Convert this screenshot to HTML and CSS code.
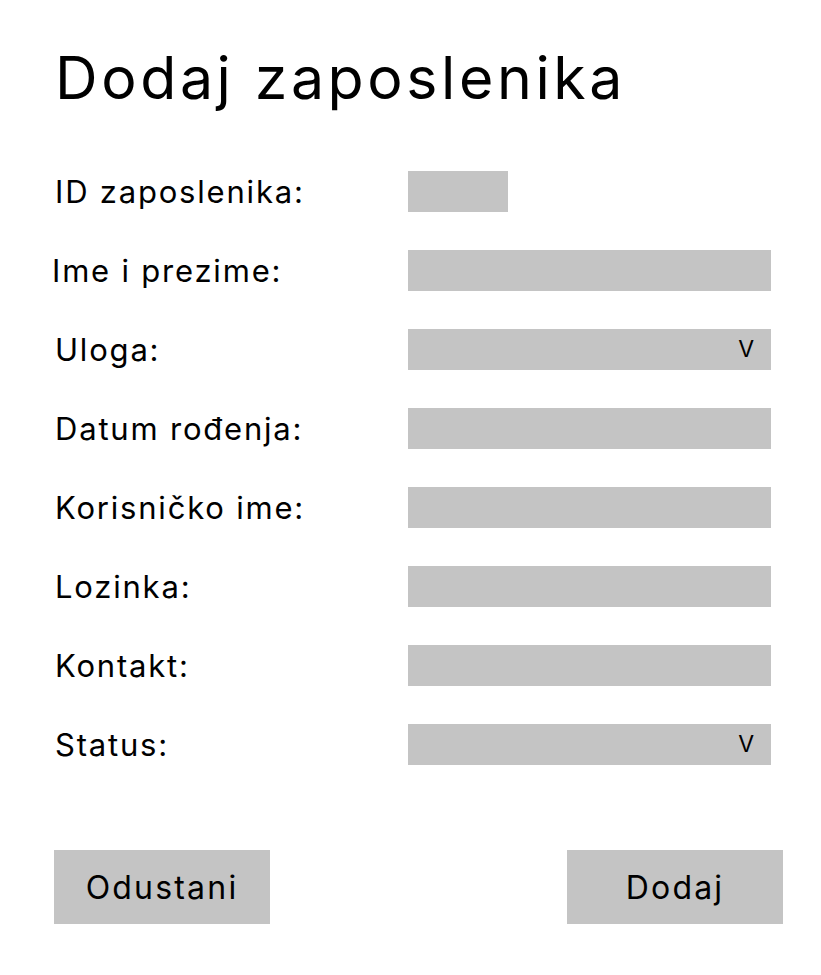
FILE: index.html
```html
<!DOCTYPE html>
<html lang="hr">
<head>
<meta charset="utf-8">
<title>Dodaj zaposlenika</title>
<link rel="stylesheet" href="styles.css">
</head>
<body>
<div class="page">
  <h1 class="title">Dodaj zaposlenika</h1>
  <div class="form">
    <div class="label">ID zaposlenika:</div>
    <div class="field"><div class="box box-short"></div></div>
    <div class="label label-shift">Ime i prezime:</div>
    <div class="field"><div class="box"></div></div>
    <div class="label">Uloga:</div>
    <div class="field"><div class="box select"><span class="chev">V</span></div></div>
    <div class="label">Datum rođenja:</div>
    <div class="field"><div class="box"></div></div>
    <div class="label">Korisničko ime:</div>
    <div class="field"><div class="box"></div></div>
    <div class="label">Lozinka:</div>
    <div class="field"><div class="box"></div></div>
    <div class="label">Kontakt:</div>
    <div class="field"><div class="box"></div></div>
    <div class="label">Status:</div>
    <div class="field"><div class="box select"><span class="chev">V</span></div></div>
  </div>
  <div class="actions">
    <div class="btn btn-left">Odustani</div>
    <div class="btn btn-right">Dodaj</div>
  </div>
</div>
</body>
</html>
```
FILE: styles.css
```css
html, body {
  margin: 0;
  padding: 0;
  background: #ffffff;
}
body {
  font-family: Inter, "Open Sans", sans-serif;
  color: #000000;
}
.page {
  padding: 42px 0 0 55px;
  width: 766px;
  box-sizing: border-box;
}
.title {
  margin: 0;
  font-size: 59px;
  line-height: 72px;
  font-weight: 400;
  letter-spacing: 3.6px;
  white-space: nowrap;
}
.form {
  margin-top: 57px;
  display: grid;
  grid-template-columns: 353px 363px;
  grid-auto-rows: 41px;
  row-gap: 38px;
}
.label {
  font-size: 31px;
  line-height: 41px;
  letter-spacing: 1.8px;
  white-space: nowrap;
}
.label-shift {
  margin-left: -3px;
}
.field {
  display: flex;
}
.box {
  flex: 1;
  height: 41px;
  background: #c4c4c4;
  display: flex;
  align-items: center;
  justify-content: flex-end;
}
.box-short {
  flex: 0 0 100px;
}
.chev {
  font-size: 23px;
  line-height: 1;
  padding-right: 17px;
}
.actions {
  margin-top: 85px;
  display: flex;
  justify-content: space-between;
  width: 729px;
  margin-left: -1px;
}
.btn {
  width: 216px;
  height: 74px;
  background: #c4c4c4;
  display: flex;
  align-items: center;
  justify-content: center;
  font-size: 32px;
  letter-spacing: 2.2px;
}
```
